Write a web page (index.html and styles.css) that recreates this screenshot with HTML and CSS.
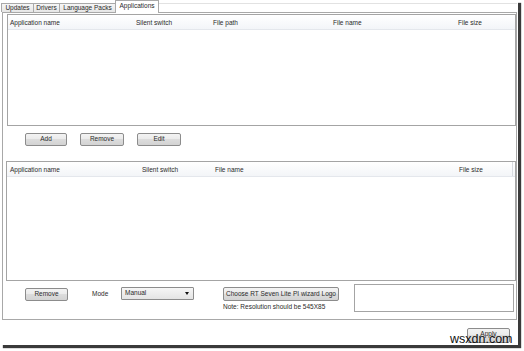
FILE: index.html
```html
<!DOCTYPE html>
<html>
<head>
<meta charset="utf-8">
<link rel="stylesheet" href="styles.css">
</head>
<body>
<div class="window">
  <div class="tabs">
    <div class="tab t-updates">Updates</div>
    <div class="tab t-drivers">Drivers</div>
    <div class="tab t-lang">Language Packs</div>
    <div class="tab t-apps active">Applications</div>
    <div class="tab-fill"></div>
  </div>
  <div class="page">
    <div class="list list-top">
      <div class="list-head head-top">
        <span>Application name</span>
        <span>Silent switch</span>
        <span>File path</span>
        <span>File name</span>
        <span>File size</span>
      </div>
    </div>
    <div class="btn-row">
      <button class="btn b-add">Add</button>
      <button class="btn b-remove">Remove</button>
      <button class="btn b-edit">Edit</button>
    </div>
    <div class="list list-bottom">
      <div class="list-head head-bottom">
        <span>Application name</span>
        <span>Silent switch</span>
        <span>File name</span>
        <span class="last">File size</span>
      </div>
    </div>
    <div class="opts">
      <button class="btn b-remove2">Remove</button>
      <span class="mode-label">Mode</span>
      <div class="select">Manual<span class="arrow"></span></div>
      <div class="logo-col">
        <button class="btn b-choose">Choose RT Seven Lite PI wizard Logo</button>
        <div class="note">Note: Resolution should be 545X85</div>
      </div>
      <div class="logo-box"></div>
    </div>
  </div>
  <div class="footer">
    <button class="btn b-apply">Apply</button>
  </div>
  <div class="watermark">wsxdn.com</div>
</div>
</body>
</html>
```
FILE: styles.css
```css
* { box-sizing: border-box; }
html, body { margin: 0; padding: 0; background: #fff; }
body {
  width: 524px;
  height: 351px;
  overflow: hidden;
  font-family: "Liberation Sans", Arial, sans-serif;
  font-size: 6.5px;
  color: #2a2a2a;
}
.window {
  position: relative;
  width: 518px;
  height: 345px;
  background: #fff;
  display: flex;
  flex-direction: column;
  box-shadow: 3px 3px 1px #3a3a3a;
}
/* tabs */
.tabs {
  display: flex;
  align-items: flex-end;
  height: 12px;
  padding-left: 1px;
  position: relative;
  z-index: 2;
}
.tab {
  height: 9px;
  border: 1px solid #a9a9a9;
  border-bottom: none;
  background: linear-gradient(#f6f6f6, #e6e6e6);
  margin-left: -1px;
  display: flex;
  align-items: center;
  justify-content: center;
  line-height: 1;
  white-space: nowrap;
}
.t-updates { width: 33px; margin-left: 0; }
.t-drivers { width: 27px; }
.t-lang { width: 57px; }
.t-apps { width: 44px; }
.tab.active {
  height: 13px;
  margin-bottom: -1px;
  background: #fff;
  align-items: flex-start;
  padding-top: 2px;
}
.tab-fill {
  width: 358px;
  height: 9px;
  border-top: 1px solid #e2e2e2;
}
/* page */
.page {
  margin-left: 2px;
  width: 515px;
  height: 308px;
  border: 1px solid #a8a8a8;
  display: flex;
  flex-direction: column;
}
.list {
  border: 1px solid #a4a4a4;
  background: #fff;
}
.list-top {
  margin: 1px 0 0 4px;
  height: 112px;
}
.list-head {
  display: grid;
  align-items: center;
  height: 15px;
  background: linear-gradient(#ffffff, #f3f5f8);
  border-bottom: 1px solid #e4e7ec;
  white-space: nowrap;
  overflow: hidden;
}
.head-top {
  grid-template-columns: 126px 77px 120px 125px 1fr;
  padding-left: 2px;
}
.head-bottom {
  grid-template-columns: 132px 73px 244px 54px;
  padding-left: 3px;
}
.head-bottom .last {
  border-right: 1px solid #d8dbe0;
  height: 100%;
  display: flex;
  align-items: center;
}
.btn-row {
  display: flex;
  gap: 13px;
  margin: 7px 0 0 22px;
}
.btn {
  padding: 0;
  margin: 0;
  font: inherit;
  color: #2a2a2a;
  border: 1px solid #8c8c8c;
  border-radius: 2px;
  background: linear-gradient(#f3f3f3, #ebebeb 45%, #dcdcdc 50%, #d3d3d3);
  display: flex;
  align-items: center;
  justify-content: center;
  line-height: 1;
  white-space: nowrap;
}
.b-add { width: 42px; height: 13px; }
.b-remove, .b-edit { width: 44px; height: 13px; }
.list-bottom {
  margin: 15px 0 0 3px;
  height: 120px;
}
.opts {
  display: flex;
  align-items: flex-start;
  margin-top: 3px;
}
.b-remove2 {
  margin: 4px 0 0 22px;
  width: 43px;
  height: 13px;
}
.mode-label {
  margin: 7px 0 0 24px;
  width: 29px;
  line-height: 1;
}
.select {
  position: relative;
  margin-top: 3px;
  width: 73px;
  height: 13px;
  border: 1px solid #8c8c8c;
  border-radius: 1px;
  background: linear-gradient(#f6f6f6, #e4e4e4);
  padding-left: 3px;
  display: flex;
  align-items: center;
  line-height: 1;
}
.arrow {
  position: absolute;
  right: 4px;
  top: 4px;
  width: 0;
  height: 0;
  border-left: 2.5px solid transparent;
  border-right: 2.5px solid transparent;
  border-top: 3px solid #111;
}
.logo-col {
  margin: 3px 0 0 29px;
  display: flex;
  flex-direction: column;
}
.b-choose {
  width: 116px;
  height: 14px;
}
.note {
  margin-top: 2px;
  line-height: 8px;
  white-space: nowrap;
}
.logo-box {
  margin-left: 15px;
  width: 160px;
  height: 28px;
  border: 1px solid #a4a4a4;
}
.footer {
  display: flex;
  justify-content: flex-end;
  padding: 8px 8px 0 0;
}
.b-apply {
  width: 43px;
  height: 15px;
  align-items: flex-start;
  padding-top: 2px;
}
.watermark {
  position: absolute;
  left: 450px;
  top: 333px;
  font-size: 12.5px;
  line-height: 13px;
  color: #111;
  z-index: 5;
}
```
